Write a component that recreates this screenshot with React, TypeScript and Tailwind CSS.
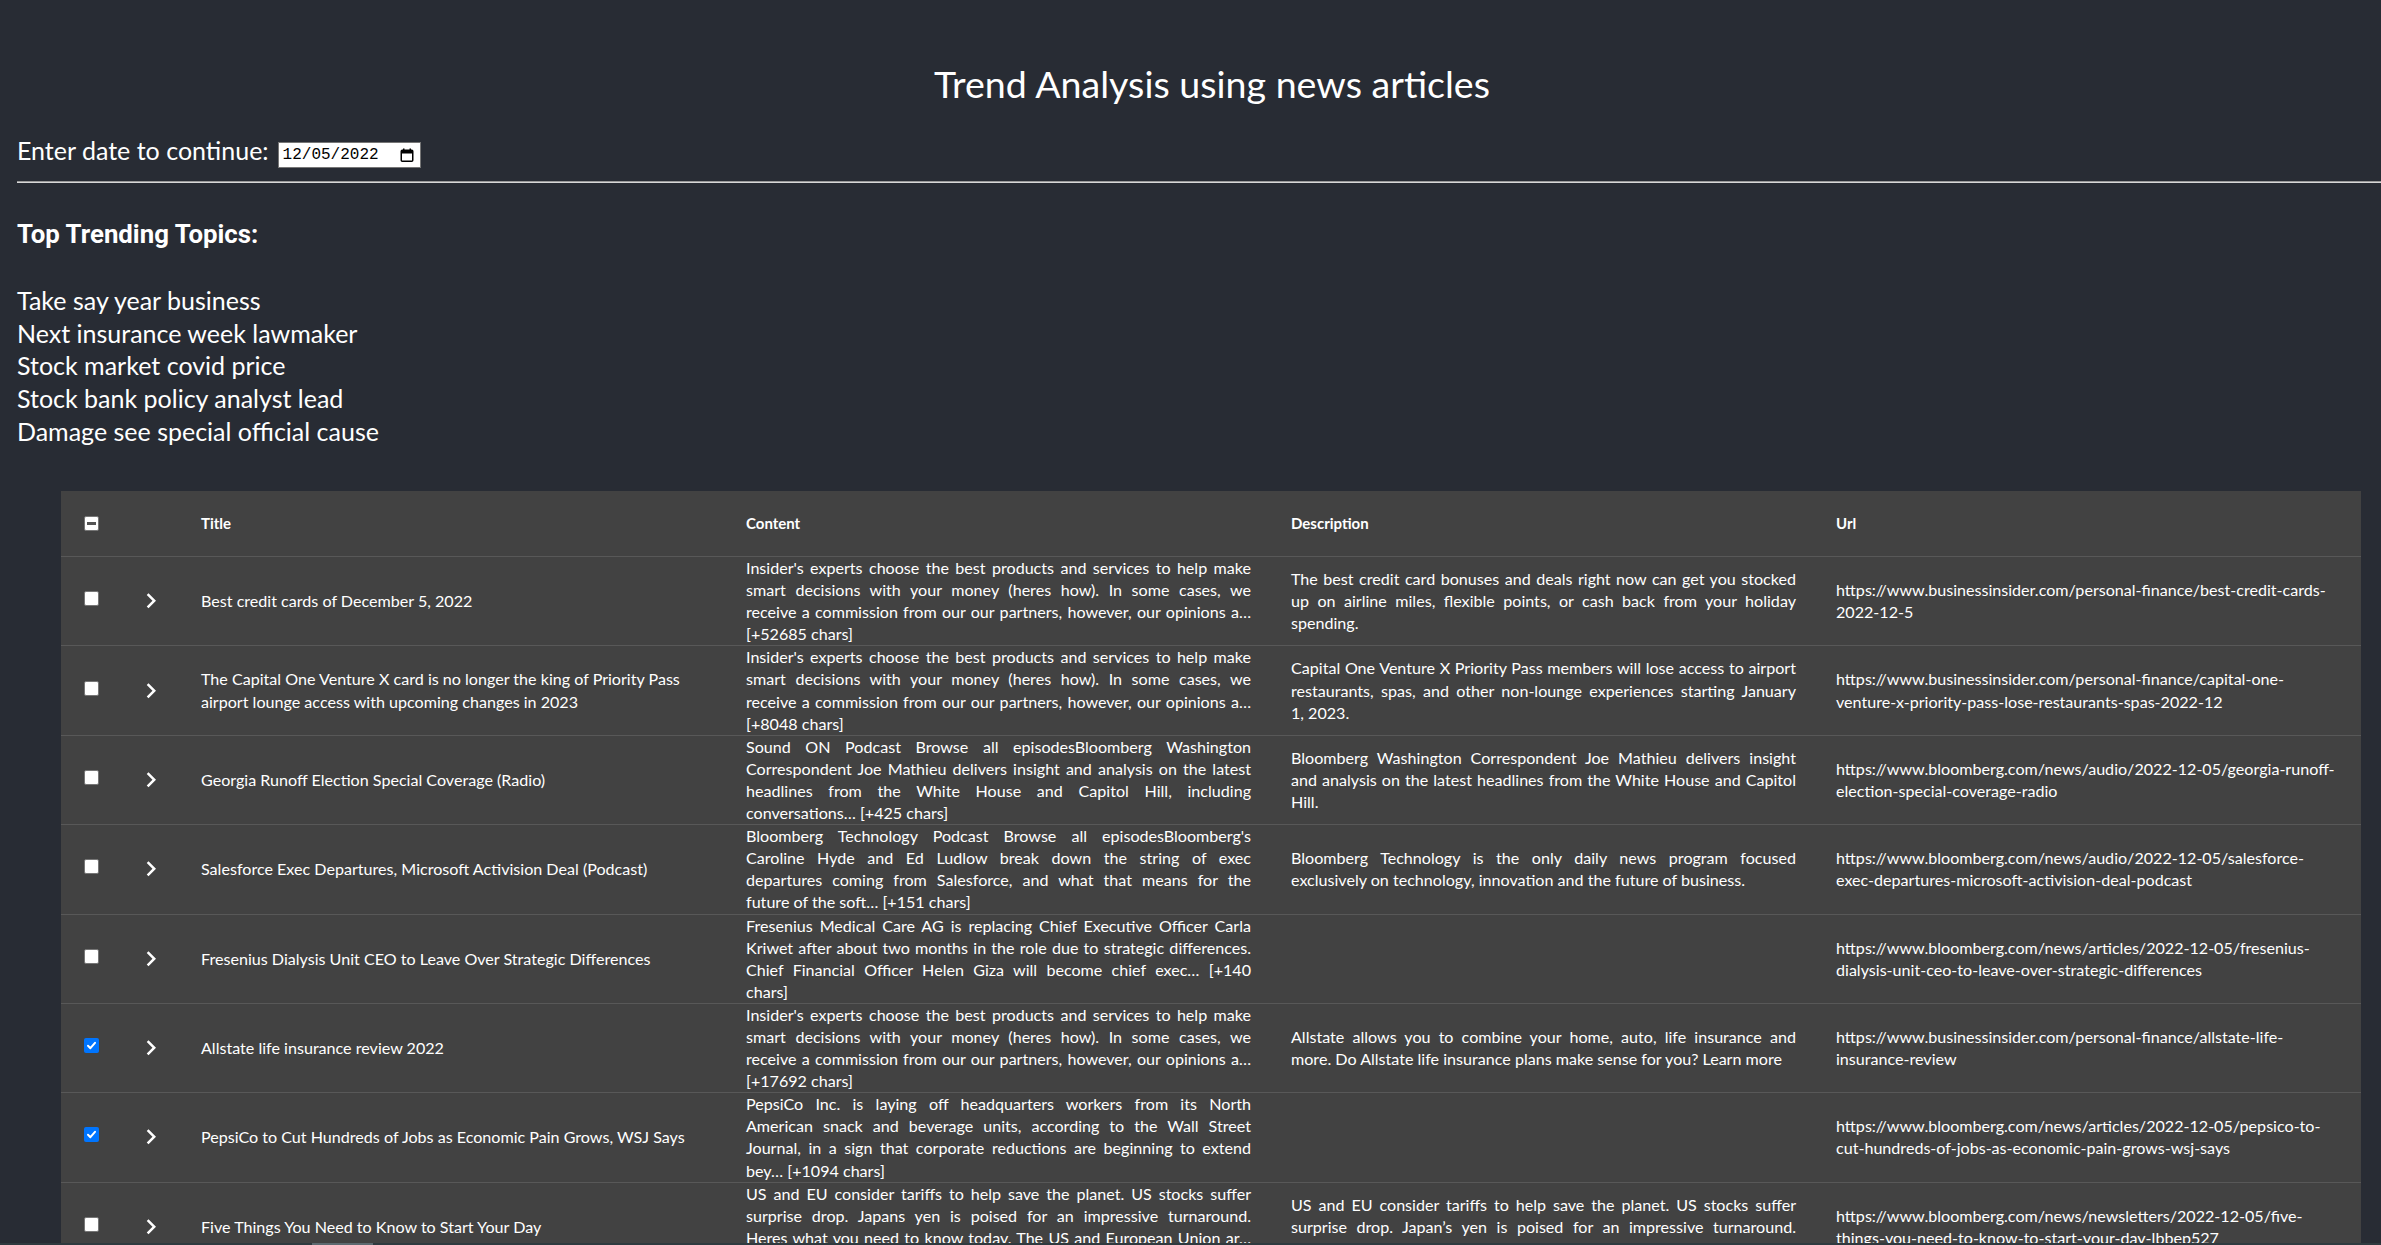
type Article = {
  title: string[];
  content: string[];
  description: string[];
  url: string[];
  selected?: boolean;
};

const insider = [
  "Insider's experts choose the best products and services to help make",
  "smart decisions with your money (heres how). In some cases, we",
  "receive a commission from our our partners, however, our opinions a…",
];

const articles: Article[] = [
  {
    title: ["Best credit cards of December 5, 2022"],
    content: [...insider, "[+52685 chars]"],
    description: [
      "The best credit card bonuses and deals right now can get you stocked",
      "up on airline miles, flexible points, or cash back from your holiday",
      "spending.",
    ],
    url: ["https://www.businessinsider.com/personal-finance/best-credit-cards-", "2022-12-5"],
  },
  {
    title: [
      "The Capital One Venture X card is no longer the king of Priority Pass",
      "airport lounge access with upcoming changes in 2023",
    ],
    content: [...insider, "[+8048 chars]"],
    description: [
      "Capital One Venture X Priority Pass members will lose access to airport",
      "restaurants, spas, and other non-lounge experiences starting January",
      "1, 2023.",
    ],
    url: [
      "https://www.businessinsider.com/personal-finance/capital-one-",
      "venture-x-priority-pass-lose-restaurants-spas-2022-12",
    ],
  },
  {
    title: ["Georgia Runoff Election Special Coverage (Radio)"],
    content: [
      "Sound ON Podcast Browse all episodesBloomberg Washington",
      "Correspondent Joe Mathieu delivers insight and analysis on the latest",
      "headlines from the White House and Capitol Hill, including",
      "conversations… [+425 chars]",
    ],
    description: [
      "Bloomberg Washington Correspondent Joe Mathieu delivers insight",
      "and analysis on the latest headlines from the White House and Capitol",
      "Hill.",
    ],
    url: ["https://www.bloomberg.com/news/audio/2022-12-05/georgia-runoff-", "election-special-coverage-radio"],
  },
  {
    title: ["Salesforce Exec Departures, Microsoft Activision Deal (Podcast)"],
    content: [
      "Bloomberg Technology Podcast Browse all episodesBloomberg's",
      "Caroline Hyde and Ed Ludlow break down the string of exec",
      "departures coming from Salesforce, and what that means for the",
      "future of the soft… [+151 chars]",
    ],
    description: [
      "Bloomberg Technology is the only daily news program focused",
      "exclusively on technology, innovation and the future of business.",
    ],
    url: [
      "https://www.bloomberg.com/news/audio/2022-12-05/salesforce-",
      "exec-departures-microsoft-activision-deal-podcast",
    ],
  },
  {
    title: ["Fresenius Dialysis Unit CEO to Leave Over Strategic Differences"],
    content: [
      "Fresenius Medical Care AG is replacing Chief Executive Officer Carla",
      "Kriwet after about two months in the role due to strategic differences.",
      "Chief Financial Officer Helen Giza will become chief exec… [+140",
      "chars]",
    ],
    description: [],
    url: [
      "https://www.bloomberg.com/news/articles/2022-12-05/fresenius-",
      "dialysis-unit-ceo-to-leave-over-strategic-differences",
    ],
  },
  {
    title: ["Allstate life insurance review 2022"],
    selected: true,
    content: [...insider, "[+17692 chars]"],
    description: [
      "Allstate allows you to combine your home, auto, life insurance and",
      "more. Do Allstate life insurance plans make sense for you? Learn more",
    ],
    url: ["https://www.businessinsider.com/personal-finance/allstate-life-", "insurance-review"],
  },
  {
    title: ["PepsiCo to Cut Hundreds of Jobs as Economic Pain Grows, WSJ Says"],
    selected: true,
    content: [
      "PepsiCo Inc. is laying off headquarters workers from its North",
      "American snack and beverage units, according to the Wall Street",
      "Journal, in a sign that corporate reductions are beginning to extend",
      "bey… [+1094 chars]",
    ],
    description: [],
    url: [
      "https://www.bloomberg.com/news/articles/2022-12-05/pepsico-to-",
      "cut-hundreds-of-jobs-as-economic-pain-grows-wsj-says",
    ],
  },
  {
    title: ["Five Things You Need to Know to Start Your Day"],
    content: [
      "US and EU consider tariffs to help save the planet. US stocks suffer",
      "surprise drop. Japans yen is poised for an impressive turnaround.",
      "Heres what you need to know today. The US and European Union ar…",
      "[+5402 chars]",
    ],
    description: [
      "US and EU consider tariffs to help save the planet. US stocks suffer",
      "surprise drop. Japan’s yen is poised for an impressive turnaround.",
      "Here’s what you need to know today.",
    ],
    url: [
      "https://www.bloomberg.com/news/newsletters/2022-12-05/five-",
      "things-you-need-to-know-to-start-your-day-lbbep527",
    ],
  },
];

const topics = [
  "Take say year business",
  "Next insurance week lawmaker",
  "Stock market covid price",
  "Stock bank policy analyst lead",
  "Damage see special official cause",
];

function Checkbox({ state }: { state: "off" | "on" | "some" }) {
  if (state === "on") {
    return (
      <span className="flex h-[15px] w-[15px] items-center justify-center rounded-[2px] bg-[#0075ff]">
        <svg width="11" height="11" viewBox="0 0 11 11" fill="none">
          <path d="M2 5.8 L4.4 8.2 L9 2.8" stroke="white" strokeWidth="2" strokeLinecap="round" strokeLinejoin="round" />
        </svg>
      </span>
    );
  }
  return (
    <span className="flex h-[15px] w-[15px] items-center justify-center rounded-[2px] border border-[#767676] bg-white">
      {state === "some" && <span className="h-[3px] w-[9px] bg-[#545454]" />}
    </span>
  );
}

function Chevron() {
  return (
    <svg width="30" height="30" viewBox="0 0 24 24" fill="white">
      <path d="M8.59 16.34l4.58-4.59-4.58-4.59L10 5.75l6 6-6 6z" />
    </svg>
  );
}

function Lines({ lines, justify }: { lines: string[]; justify?: boolean }) {
  return (
    <div className="w-full">
      {lines.map((line, i) => (
        <div
          key={i}
          className={`whitespace-nowrap ${justify && i < lines.length - 1 ? "text-justify [text-align-last:justify]" : ""}`}
        >
          {line}
        </div>
      ))}
    </div>
  );
}

function CalendarIcon() {
  return (
    <svg width="14" height="14" viewBox="0 0 14 14" fill="none">
      <rect x="1.25" y="2.25" width="11.5" height="11" rx="1" stroke="black" strokeWidth="1.5" />
      <rect x="1" y="2" width="12" height="3.5" fill="black" />
      <rect x="3" y="0.5" width="1.5" height="2.5" fill="black" />
      <rect x="9.5" y="0.5" width="1.5" height="2.5" fill="black" />
    </svg>
  );
}

export default function App() {
  return (
    <div className="min-h-screen bg-[#282c34] text-white [font-family:Lato,'Liberation_Sans',sans-serif]">
      <div className="flex flex-col pl-[17px]">
        <h1 className="pt-[61px] pl-[26px] text-center text-[37.6px] font-normal leading-[45px]">
          Trend Analysis using news articles
        </h1>

        <div className="mt-[28px] flex items-start">
          <span className="text-[25px] leading-[33px]">Enter date to continue:</span>
          <div className="ml-[9px] mt-[8px] flex h-[26px] w-[143px] items-center justify-between border border-[#767676] bg-white pl-[4px] pr-[6px] text-[16px] text-black [font-family:'Liberation_Mono',monospace]">
            <span>12/05/2022</span>
            <CalendarIcon />
          </div>
        </div>

        <div className="mt-[13px] border-t border-b border-t-[#9a9a9a] border-b-[#d8d8d8]" />

        <h3 className="mt-[34.5px] text-[25.8px] font-bold leading-[33px] [font-family:Roboto,sans-serif]">
          Top Trending Topics:
        </h3>

        <ul className="mt-[33.5px] text-[25px] leading-[32.7px]">
          {topics.map((t) => (
            <li key={t}>{t}</li>
          ))}
        </ul>

        <div className="ml-[44px] mt-[43.5px] w-[2300px] bg-[#424242] text-[16.1px] leading-[22.1px]">
          <div className="flex h-[66px] items-center border-b border-[#585858] text-[15px] font-bold">
            <div className="flex w-[60px] justify-center">
              <Checkbox state="some" />
            </div>
            <div className="w-[60px]" />
            {["Title", "Content", "Description", "Url"].map((h) => (
              <div key={h} className="w-[545px] px-[20px]">
                {h}
              </div>
            ))}
          </div>

          {articles.map((a, i) => (
            <div key={i} className="flex min-h-[60px] items-stretch border-b border-[#585858]">
              <div className="flex w-[60px] items-center justify-center">
                <span className="-mt-[5px]">
                  <Checkbox state={a.selected ? "on" : "off"} />
                </span>
              </div>
              <div className="flex w-[60px] items-center justify-center">
                <Chevron />
              </div>
              <div className="flex w-[545px] items-center px-[20px]">
                <Lines lines={a.title} />
              </div>
              <div className="flex w-[545px] items-center px-[20px]">
                <Lines lines={a.content} justify />
              </div>
              <div className="flex w-[545px] items-center px-[20px]">
                <Lines lines={a.description} justify />
              </div>
              <div className="flex w-[545px] items-center px-[20px]">
                <Lines lines={a.url} />
              </div>
            </div>
          ))}
        </div>
      </div>

      {/* window scrollbar peeking in at the bottom edge */}
      <div className="fixed bottom-0 left-0 right-0 h-[2px] bg-[#2f3a3f]">
        <div className="ml-[312px] h-full w-[61px] bg-[#5d6a70]" />
      </div>
    </div>
  );
}
